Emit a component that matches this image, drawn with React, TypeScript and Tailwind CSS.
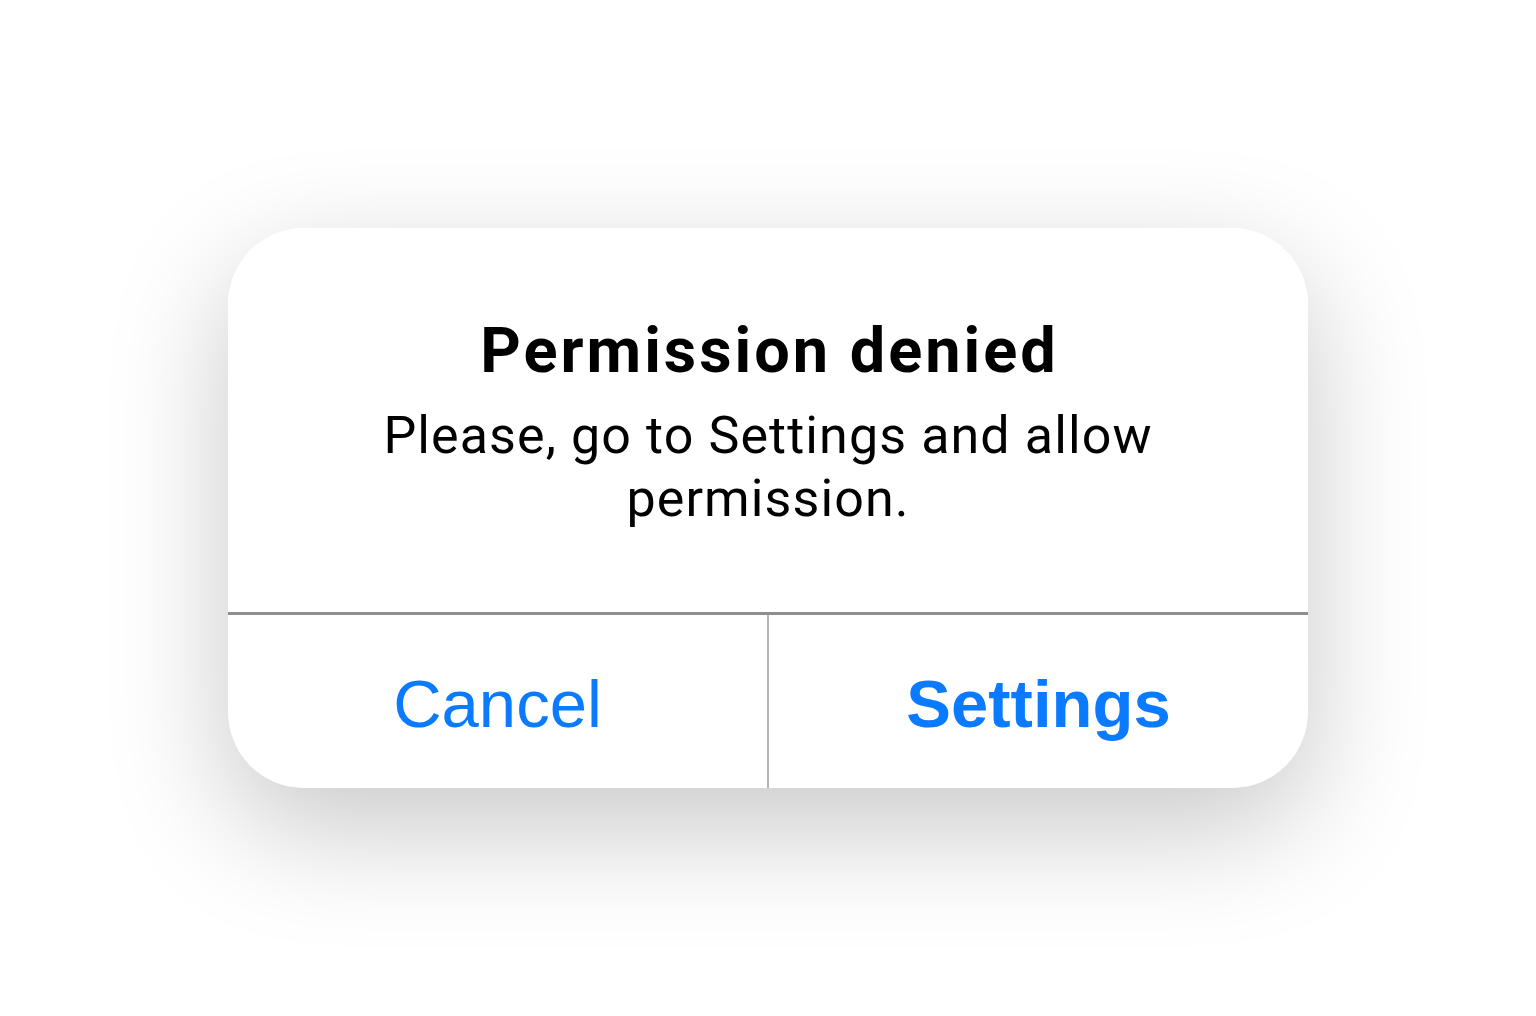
export default function App() {
  return (
    <div className="w-[1536px] h-[1016px] bg-white flex items-center justify-center">
      <div className="w-[1080px] h-[560px] bg-white rounded-[76px] shadow-[0_40px_120px_rgba(0,0,0,0.22)] flex flex-col overflow-hidden">
        <div className="h-[384px] flex flex-col items-center pt-[85px] text-black" style={{ fontFamily: "Roboto, 'Noto Sans', sans-serif" }}>
          <div className="text-[63px] leading-[76px] font-bold tracking-[3px] pl-[3px]">Permission denied</div>
          <div className="mt-[15px] text-[52px] leading-[63px] text-center w-[840px] tracking-[1.1px]">
            Please, go to Settings and allow permission.
          </div>
        </div>
        <div className="h-[3px] bg-[#8f8f8f]" />
        <div className="flex-1 flex pt-[6px]" style={{ fontFamily: "'Liberation Sans', Arial, sans-serif" }}>
          <div className="flex-1 flex items-center justify-center text-[67px] text-[#0a7aff]">Cancel</div>
          <div className="w-[2px] bg-[#b4b4b4] -mt-[6px]" />
          <div className="flex-1 flex items-center justify-center text-[67px] font-bold text-[#0a7aff]">Settings</div>
        </div>
      </div>
    </div>
  );
}
